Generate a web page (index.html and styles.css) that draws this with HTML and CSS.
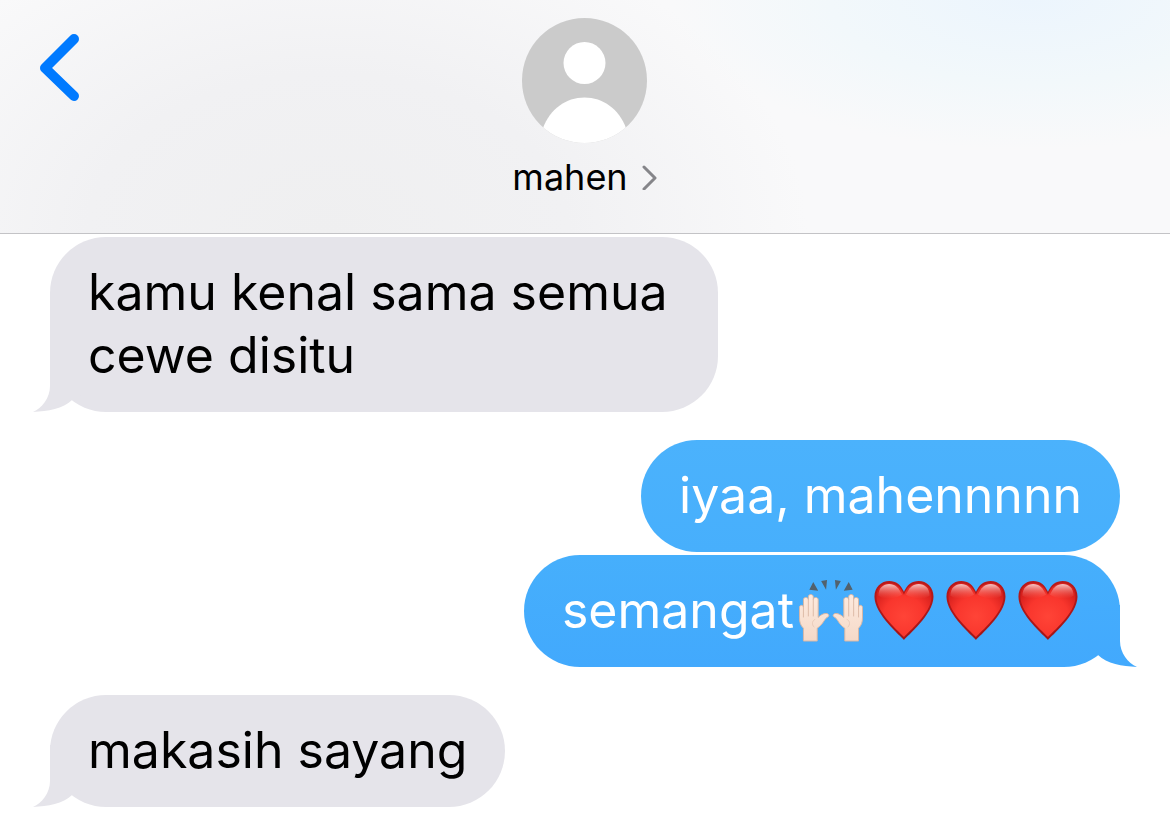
FILE: index.html
```html
<!DOCTYPE html>
<html lang="id">
<head>
<meta charset="utf-8">
<meta name="viewport" content="width=device-width, initial-scale=1">
<title>mahen</title>
<link rel="stylesheet" href="styles.css">
</head>
<body>
<svg class="defs" aria-hidden="true">
  <defs>
    <radialGradient id="heart-fill" cx="0.5" cy="0.62" r="0.62">
      <stop offset="0" stop-color="#ff4437"/>
      <stop offset="0.6" stop-color="#f9362d"/>
      <stop offset="1" stop-color="#d61f1c"/>
    </radialGradient>
    <linearGradient id="heart-shine" x1="0" y1="0" x2="0" y2="1">
      <stop offset="0" stop-color="#fff" stop-opacity="0.75"/>
      <stop offset="1" stop-color="#ff7a6c" stop-opacity="0"/>
    </linearGradient>
    <linearGradient id="heart-edge" x1="0" y1="0" x2="0" y2="1">
      <stop offset="0" stop-color="#b81a1a"/>
      <stop offset="1" stop-color="#a31517"/>
    </linearGradient>
    <linearGradient id="tail-blue" x1="0" y1="0" x2="0" y2="1">
      <stop offset="0" stop-color="#44acfd"/>
      <stop offset="1" stop-color="#42a9fd"/>
    </linearGradient>
    <symbol id="heart" viewBox="0 0 72 64">
      <path d="M38 62C35 58 8 36 8 18C8 8 15 2 23 2C30 2 35 6 38 13C41 6 46 2 53 2C61 2 68 8 68 18C68 36 41 58 38 62Z" fill="url(#heart-edge)"/>
      <path d="M38 59C34 54 10 35 10 18C10 9 16 4 23 4C30 4 35 8 38 16C41 8 46 4 53 4C60 4 66 9 66 18C66 35 42 54 38 59Z" fill="url(#heart-fill)"/>
      <path d="M12 17C12 9 17 5 23 5C29 5 33 9 36 16C30 20 19 22 12 17Z" fill="url(#heart-shine)"/>
      <path d="M64 17C64 9 59 5 53 5C47 5 43 9 40 16C46 20 57 22 64 17Z" fill="url(#heart-shine)"/>
    </symbol>
    <linearGradient id="skin" x1="0" y1="0" x2="0" y2="1">
      <stop offset="0" stop-color="#fdeade"/>
      <stop offset="1" stop-color="#f5d9c8"/>
    </linearGradient>
    <g id="hand">
      <path d="M9 63V50C6 47 5 44 5 39V29C5 26 9 26 9 29V21C9 18 14 18 14 21V18C14 15 19 15 19 18V21C19 18 24 18 24 21V39C26 37 29 35 32 35C35 35 36 38 33 39C30 41 29 46 23 50V63Z" fill="url(#skin)" stroke="#d7b7a5"/>
      <path d="M9 29V39M14 21V38M19 21V38" fill="none" stroke="#ddbba8"/>
      <path d="M21 41C18 42 17 46 20 49" fill="none" stroke="#e8c9b7"/>
    </g>
  </defs>
</svg>

<header class="topbar">
  <button class="back" type="button" aria-label="Kembali">
    <svg width="40" height="68" viewBox="0 0 40 68"><path d="M34 5 5 34 34 62" fill="none" stroke="#007aff" stroke-width="10" stroke-linecap="round" stroke-linejoin="round"/></svg>
  </button>
  <button class="contact" type="button">
    <svg class="avatar" viewBox="0 0 125 125" aria-hidden="true">
      <defs><clipPath id="avatar-clip"><circle cx="62.500" cy="62.500" r="62.500"/></clipPath></defs>
      <g clip-path="url(#avatar-clip)">
        <rect width="125" height="125" fill="#cbcbcb"/>
        <circle cx="62.500" cy="45" r="21" fill="#fff"/>
        <path d="M21 110C28 91 44 79.500 62.500 79.500S97 91 104 110V125H21Z" fill="#fff"/>
      </g>
    </svg>
    <span class="name">mahen
      <svg width="16" height="26" viewBox="0 0 16 26" aria-hidden="true"><path d="M2 3 13 14 2 25" fill="none" stroke="#858589" stroke-width="3" stroke-linecap="round" stroke-linejoin="round"/></svg>
    </span>
  </button>
</header>

<main class="thread">
  <div class="group received">
    <p class="bubble">kamu kenal sama semua cewe disitu
      <svg class="tail" viewBox="0 0 56 62" aria-hidden="true"><path d="M17 0V36C17 48 9 58 0 62C15 61 30 59 39 50L56 40V0Z"/></svg>
    </p>
  </div>
  <div class="group sent">
    <p class="bubble first">iyaa, mahennnnn</p>
    <p class="bubble last"><span>semangat</span><svg class="emoji" role="img" aria-label="tangan terangkat" viewBox="0 0 72 64">
        <use href="#hand"/>
        <use href="#hand" transform="matrix(-1 0 0 1 74 0)"/>
        <path d="M19 3 24 12 15 11ZM27 2 33 1 32 11ZM47 2 41 1 42 11ZM55 3 50 12 59 11Z" fill="#52616d"/>
      </svg><svg class="emoji" role="img" aria-label="hati merah"><use href="#heart"/></svg><svg class="emoji" role="img" aria-label="hati merah"><use href="#heart"/></svg><svg class="emoji" role="img" aria-label="hati merah"><use href="#heart"/></svg>
      <svg class="tail" viewBox="0 0 56 62" aria-hidden="true"><path d="M17 0V36C17 48 9 58 0 62C15 61 30 59 39 50L56 40V0Z"/></svg>
    </p>
  </div>
  <div class="group received">
    <p class="bubble">makasih sayang
      <svg class="tail" viewBox="0 0 56 62" aria-hidden="true"><path d="M17 0V36C17 48 9 58 0 62C15 61 30 59 39 50L56 40V0Z"/></svg>
    </p>
  </div>
</main>
</body>
</html>
```
FILE: styles.css
```css
* {
  box-sizing: border-box;
}

body {
  margin: 0;
  background: #fff;
  color: #000;
  font-family: Inter, "Liberation Sans", sans-serif;
}

.defs {
  position: absolute;
  width: 0;
  height: 0;
}

button {
  padding: 0;
  border: 0;
  background: none;
  color: inherit;
  font: inherit;
  cursor: pointer;
}

.topbar {
  display: grid;
  grid-template-columns: 1fr auto 1fr;
  align-items: start;
  padding: 18px 40px 35px;
  border-bottom: 1px solid #c3c3c6;
  background:
    radial-gradient(ellipse 360px 150px at 88% 0, #ecf5fd, #f2f8fb 55%, transparent),
    radial-gradient(ellipse 480px 320px at 28% 100%, #efeff0, #f1f1f3 50%, transparent),
    #f9f9fa;
}

.back {
  justify-self: start;
  margin-top: 16px;
}

.back svg,
.avatar {
  display: block;
}

.contact {
  display: flex;
  flex-direction: column;
  align-items: center;
  gap: 13px;
}

.avatar {
  width: 125px;
  height: 125px;
}

.name {
  display: flex;
  align-items: center;
  gap: 14px;
  font-size: 36px;
  line-height: 42px;
}

.thread {
  display: flex;
  flex-direction: column;
  gap: 28px;
  padding: 3px 50px 20px;
}

.group {
  display: flex;
  flex-direction: column;
  align-items: flex-start;
  gap: 3px;
}

.sent {
  align-items: flex-end;
}

.bubble {
  position: relative;
  max-width: 668px;
  margin: 0;
  padding: 24px 38px 25px;
  border-radius: 56px;
  font-size: 50px;
  line-height: 63px;
}

.received .bubble {
  background: #e5e4ea;
}

.sent .bubble {
  color: #fff;
}

.sent .first {
  background: linear-gradient(#4bb2fc, #47affc);
}

.sent .last {
  display: flex;
  align-items: center;
  background: linear-gradient(#46affc, #42a9fd);
}

.emoji {
  flex: none;
  width: 72px;
  height: 63px;
}

.tail {
  position: absolute;
  bottom: 0;
  left: -17px;
  width: 56px;
  height: 62px;
  fill: #e5e4ea;
}

.sent .tail {
  right: -17px;
  left: auto;
  fill: url(#tail-blue);
  transform: scaleX(-1);
}
```
